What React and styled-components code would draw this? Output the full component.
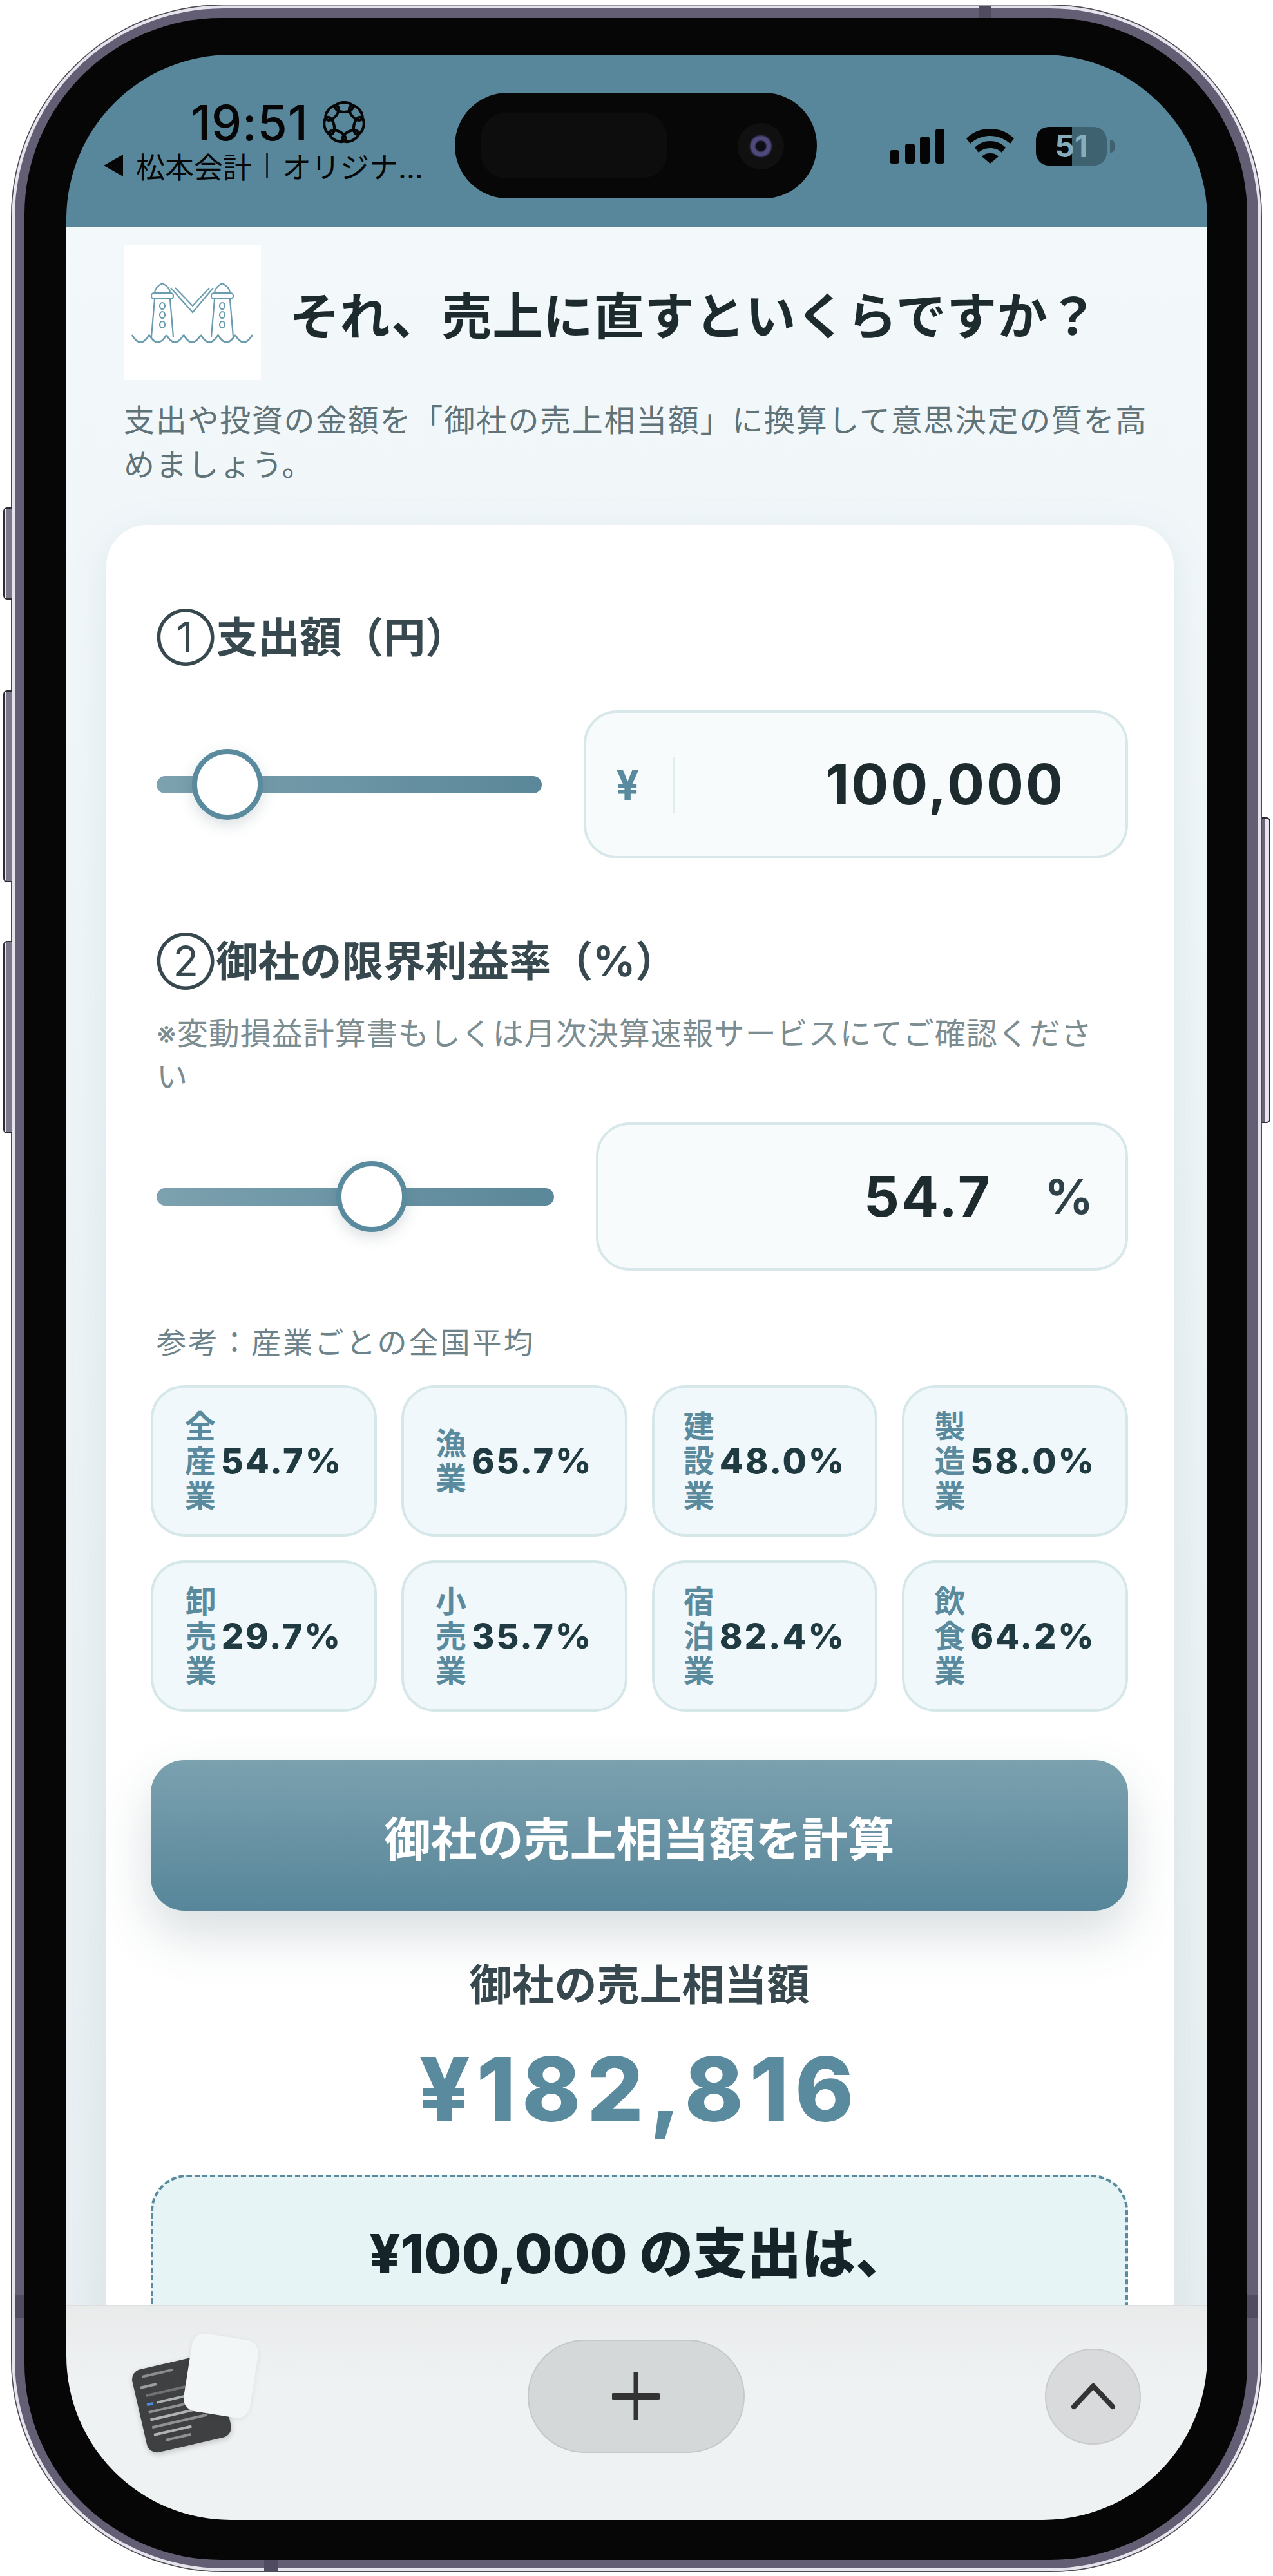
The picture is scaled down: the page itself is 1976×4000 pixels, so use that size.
import styled, { createGlobalStyle } from 'styled-components'

const GlobalStyle = createGlobalStyle`
  html, body {
    margin: 0;
    background: #fff;
    font-family: Inter, "Noto Sans CJK JP", sans-serif;
  }
`

const cjk = `Inter, "Noto Sans CJK JP", sans-serif`
const teal = '#5a8a9d'

const Page = styled.div`
  width: 1976px;
  height: 4000px;
  padding: 7px 0 0 17px;
  box-sizing: border-box;
`

const Shell = styled.div`
  position: relative;
  width: 1942px;
  height: 3987px;
  box-sizing: border-box;
  padding: 21px 23px 19px 21px;
  border-radius: 330px;
  background: #645e74;
  box-shadow: inset 0 0 0 1.5px #4a4a50, inset 0 0 0 6px #e6e3ec;
`

const Bezel = styled.div`
  width: 100%;
  height: 100%;
  box-sizing: border-box;
  padding: 57px 62px 62px 65px;
  border-radius: 305px;
  background: #060606;
`

const Screen = styled.div`
  display: flex;
  flex-direction: column;
  height: 100%;
  border-radius: 255px;
  overflow: hidden;
`

const SideButton = styled.div`
  position: absolute;
  top: ${p => p.$top}px;
  ${p => (p.$right ? 'right: -13px' : 'left: -12px')};
  width: 13px;
  height: ${p => p.$height}px;
  box-sizing: border-box;
  border: 2px solid #2b2b30;
  ${p => (p.$right ? 'border-left: none' : 'border-right: none')};
  border-radius: ${p => (p.$right ? '0 6px 6px 0' : '6px 0 0 6px')};
  background: linear-gradient(${p => (p.$right ? '90deg, #6b6579 50%, #e9e6f0 50%' : '90deg, #e9e6f0 30%, #7d778c 30%')});
`

const Band = styled.div`
  position: absolute;
  background: #514b60;
  ${p => p.$at}
`

const StatusBar = styled.div`
  position: relative;
  flex: none;
  display: flex;
  justify-content: space-between;
  height: 268px;
  box-sizing: border-box;
  padding: 72px 144px 0 57px;
  background: #58879b;
  color: #060606;
`

const StatusLeft = styled.div`
  display: flex;
  flex-direction: column;
`

const TimeRow = styled.div`
  display: flex;
  align-items: center;
  gap: 22px;
  height: 66px;
  padding-left: 136px;
  font-size: 75px;
  font-weight: 500;
  letter-spacing: 0.8px;
`

const BackLine = styled.div`
  display: flex;
  align-items: center;
  gap: 19px;
  margin-top: 10px;
  height: 48px;
  font-family: ${cjk};
  font-size: 45px;
  white-space: nowrap;
`

const BackSep = styled.span`
  display: inline-block;
  width: 3px;
  height: 40px;
  margin: 0 22px 0 22px;
  background: #1d2c33;
`

const Island = styled.div`
  position: absolute;
  left: 603px;
  top: 59px;
  width: 562px;
  height: 164px;
  border-radius: 82px;
  background: #070707;
`

const IslandPatch = styled.div`
  position: absolute;
  left: 40px;
  top: 31px;
  width: 290px;
  height: 102px;
  border-radius: 40px;
  background: #0d0d0d;
`

const Lens = styled.div`
  position: absolute;
  left: 439px;
  top: 47px;
  width: 72px;
  height: 72px;
  border-radius: 50%;
  background: radial-gradient(circle, #0e0d16 0 7px, #4e4a7c 10px 15px, #14131a 18px, #101010 20px);
`

const StatusRight = styled.div`
  display: flex;
  align-items: center;
  gap: 34px;
  height: 60px;
  margin-top: 40px;
`

const Battery = styled.div`
  position: relative;
  width: 110px;
  height: 60px;
  border-radius: 20px;
  overflow: hidden;
  background: linear-gradient(90deg, #050505 51%, #3f6270 51%);
  color: #86adba;
  font-size: 48px;
  font-weight: 700;
  line-height: 60px;
  text-align: center;
`

const BatteryNub = styled.div`
  width: 7px;
  height: 20px;
  margin-left: -29px;
  border-radius: 0 6px 6px 0;
  background: #3f6270;
`

const Content = styled.div`
  flex: 1;
  min-height: 0;
  overflow: hidden;
  padding: 28px 52px 0 62px;
  background: linear-gradient(180deg, #f3f8fb 0%, #eef4f6 40%, #e8eef1 100%);
  font-family: ${cjk};
`

const Header = styled.div`
  display: flex;
  align-items: center;
  gap: 44px;
  margin-left: 27px;
`

const LogoBox = styled.div`
  flex: none;
  width: 213px;
  height: 209px;
  background: #fff;
`

const Title = styled.h1`
  margin: 0;
  font-size: 78px;
  font-weight: 700;
  letter-spacing: 0.6px;
  color: #1d2b2f;
  white-space: nowrap;
`

const Lead = styled.p`
  margin: 28px 0 59px 27px;
  width: 1620px;
  font-size: 48px;
  line-height: 69px;
  letter-spacing: 1.7px;
  color: #5f7378;
`

const Card = styled.div`
  box-sizing: border-box;
  padding: 137px 71px 100px 69px;
  border-radius: 64px;
  background: #fff;
  box-shadow: 0 12px 60px rgba(90, 138, 157, 0.12);
`

const FieldLabel = styled.div`
  margin: ${p => p.$top || 0}px 0 0 9px;
  font-size: 65px;
  line-height: 76px;
  font-weight: 700;
  color: #37494f;
`

const CircledNum = styled.span`
  font-weight: 400;
  margin-right: 2px;
`

const Row = styled.div`
  display: flex;
  align-items: center;
  gap: 65px;
  margin-top: ${p => p.$top}px;
  padding-left: 9px;
`

const Slider = styled.div`
  position: relative;
  flex: 1;
  height: 27px;
  border-radius: 14px;
  background: linear-gradient(90deg, #7ca1af, #5a8799);
`

const Thumb = styled.div`
  position: absolute;
  top: -42px;
  left: ${p => p.$left}px;
  width: 110px;
  height: 110px;
  box-sizing: border-box;
  border: 8px solid ${teal};
  border-radius: 50%;
  background: #fff;
  box-shadow: 0 8px 22px rgba(50, 80, 90, 0.18);
`

const InputBox = styled.div`
  flex: none;
  display: flex;
  align-items: center;
  width: ${p => p.$width}px;
  height: 230px;
  box-sizing: border-box;
  padding: 0 ${p => p.$pr}px 0 46px;
  border: 4px solid #d8e8ea;
  border-radius: 52px;
  background: #f7fbfc;
`

const Yen = styled.span`
  width: 43px;
  font-family: ${cjk};
  font-size: 64px;
  font-weight: 700;
  color: ${teal};
`

const YenSep = styled.span`
  width: 3px;
  height: 87px;
  margin-left: 46px;
  background: #e0ecee;
`

const InputValue = styled.span`
  flex: 1;
  text-align: right;
  font-family: Inter, sans-serif;
  font-size: 86px;
  font-weight: 700;
  letter-spacing: 3px;
  color: #1d2b2f;
`

const Unit = styled.span`
  margin-left: 82px;
  font-family: Inter, sans-serif;
  font-size: 74px;
  font-weight: 700;
  color: #2f4248;
`

const Note = styled.p`
  margin: 40px 0 0 9px;
  width: 1490px;
  font-size: 48px;
  line-height: 67px;
  letter-spacing: 1px;
  color: #7c8d92;
`

const RefLabel = styled.div`
  margin: 81px 0 37px 9px;
  font-size: 46px;
  line-height: 60px;
  letter-spacing: 3px;
  color: #6d8389;
`

const ChipGrid = styled.div`
  display: grid;
  grid-template-columns: repeat(4, 1fr);
  gap: 37px 38px;
`

const Chip = styled.div`
  display: flex;
  align-items: center;
  justify-content: center;
  gap: 8px;
  height: 235px;
  box-sizing: border-box;
  border: 4px solid #d6e7ea;
  border-radius: 52px;
  background: #f1f8fb;
`

const ChipName = styled.span`
  flex: none;
  width: 48px;
  font-size: 48px;
  line-height: 54px;
  font-weight: 700;
  color: ${teal};
`

const ChipRate = styled.span`
  flex: none;
  font-family: Inter, sans-serif;
  font-size: 54px;
  font-weight: 800;
  letter-spacing: 2.8px;
  color: #1f3a40;
`

const CalcButton = styled.button`
  display: block;
  width: 100%;
  height: 234px;
  margin-top: 75px;
  border: none;
  border-radius: 52px;
  background: linear-gradient(180deg, #7ba1af, #57869a);
  box-shadow: 0 36px 80px rgba(60, 90, 100, 0.2);
  color: #fff;
  font-family: ${cjk};
  font-size: 72px;
  font-weight: 700;
`

const ResultLabel = styled.div`
  margin-top: 77px;
  font-size: 66px;
  line-height: 76px;
  font-weight: 700;
  text-align: center;
  color: #37494f;
`

const ResultValue = styled.div`
  margin-top: 44px;
  font-family: Inter, "Noto Sans CJK JP", sans-serif;
  font-size: 138px;
  line-height: 160px;
  font-weight: 800;
  letter-spacing: 9.5px;
  text-align: center;
  color: ${teal};
`

const ResultBox = styled.div`
  box-sizing: border-box;
  min-height: 500px;
  margin-top: 53px;
  padding-top: 69px;
  border: 4px dashed ${teal};
  border-radius: 56px;
  background: #e6f4f6;
  font-size: 84px;
  line-height: 100px;
  font-weight: 800;
  text-align: center;
  color: #142428;
`

const BottomBar = styled.div`
  flex: none;
  display: grid;
  grid-template-columns: 1fr auto 1fr;
  align-items: center;
  height: 334px;
  box-sizing: border-box;
  padding: 0 103px 52px 100px;
  border-top: 2px solid #dcdfe0;
  background: linear-gradient(180deg, #e9ebeb, #eff2f3 35%);
`

const TabStack = styled.div`
  position: relative;
  width: 220px;
  height: 190px;
`

const TabDark = styled.div`
  position: absolute;
  left: 12px;
  top: 40px;
  width: 134px;
  height: 132px;
  border-radius: 16px;
  overflow: hidden;
  background: #3f4042;
  transform: rotate(-13deg);
  box-shadow: 0 3px 8px rgba(0, 0, 0, 0.2);
`

const TabLight = styled.div`
  position: absolute;
  left: 88px;
  top: 2px;
  width: 104px;
  height: 122px;
  border-radius: 20px;
  background: #f3f6f7;
  transform: rotate(9deg);
  box-shadow: 0 2px 8px rgba(0, 0, 0, 0.08);
`

const PlusButton = styled.button`
  display: flex;
  align-items: center;
  justify-content: center;
  width: 337px;
  height: 176px;
  padding: 0;
  border: 2px solid #c5c8c9;
  border-radius: 88px;
  background: #d5d8d9;
`

const UpButton = styled.button`
  justify-self: end;
  display: flex;
  align-items: center;
  justify-content: center;
  width: 149px;
  height: 149px;
  padding: 0;
  border: 2px solid #c9cbcc;
  border-radius: 50%;
  background: #d8dadb;
`

// seven overlapping lobes in a ring, next to the clock
function FocusIcon() {
  const lobes = [0, 1, 2, 3, 4, 5, 6].map(i => (i * 360) / 7)
  return (
    <svg width="66" height="66" viewBox="0 0 66 66" fill="none" stroke="#060606" strokeWidth="4.2">
      {lobes.map(a => (
        <ellipse key={a} cx="33" cy="9.5" rx="13.5" ry="7.5" transform={`rotate(${a} 33 33)`} />
      ))}
    </svg>
  )
}

function BackArrow() {
  return (
    <svg width="32" height="36" viewBox="0 0 32 36">
      <path d="M31 1 L1 18 L31 35 Z" fill="#060606" />
    </svg>
  )
}

function SignalIcon() {
  return (
    <svg width="85" height="54" viewBox="0 0 85 54" fill="#050505">
      <rect x="0" y="33" width="15" height="21" rx="4" />
      <rect x="24" y="23" width="15" height="31" rx="4" />
      <rect x="47" y="12" width="15" height="42" rx="4" />
      <rect x="71" y="0" width="14" height="54" rx="4" />
    </svg>
  )
}

function WifiIcon() {
  return (
    <svg width="74" height="54" viewBox="0 0 74 54" fill="#050505">
      <path d="M37 0 C51 0 64 5 74 15 L68 23 C59 15 48 11 37 11 C26 11 15 15 6 23 L0 15 C10 5 23 0 37 0 Z" />
      <path d="M37 19 C46 19 54 22 61 29 L55 37 C50 32 44 30 37 30 C30 30 24 32 19 37 L13 29 C20 22 28 19 37 19 Z" />
      <path d="M37 38 C42 38 46 39 50 43 L37 54 L24 43 C28 39 32 38 37 38 Z" />
    </svg>
  )
}

function LighthouseLogo() {
  const waves = [0, 1, 2, 3, 4, 5, 6].map(i => `M${13 + i * 26.7} 139 Q${26 + i * 26.7} 162 ${39.7 + i * 26.7} 139`)
  const tower = x => (
    <g key={x}>
      <path d={`M${x - 12} 74 C${x - 12} 66 ${x - 6} 62 ${x} 59 C${x + 6} 62 ${x + 12} 66 ${x + 12} 74`} />
      <rect x={x - 17} y="74" width="34" height="9" rx="4" />
      <path d={`M${x - 12} 84 L${x - 17} 142 M${x + 12} 84 L${x + 17} 142`} />
      <ellipse cx={x} cy="94" rx="4" ry="5" />
      <ellipse cx={x} cy="108" rx="4" ry="5" />
      <ellipse cx={x} cy="123" rx="4" ry="5" />
    </g>
  )
  return (
    <svg width="213" height="209" viewBox="0 0 213 209" fill="none" stroke="#6a9cb0" strokeWidth="2.2">
      {tower(60)}
      {tower(153)}
      <path d="M73 66 L107 104 L139 66 M80 66 L107 94 L133 66" />
      {waves.map(d => (
        <path key={d} d={d} strokeWidth="2.6" />
      ))}
    </svg>
  )
}

function CodeThumb() {
  const rows = [
    ['#8b8d90', 10, 16, 50], ['#9a9c9f', 26, 10, 26], ['#6f7174', 40, 16, 70], ['#4a8be0', 54, 14, 10],
    ['#b0b2b5', 54, 30, 60], ['#8f9194', 66, 14, 90], ['#b0b2b5', 78, 14, 72], ['#8f9194', 90, 14, 88],
    ['#b0b2b5', 102, 14, 60], ['#8f9194', 114, 30, 40],
  ]
  return (
    <svg width="134" height="132" viewBox="0 0 134 132">
      {rows.map(([c, y, x, w]) => (
        <rect key={`${y}-${x}`} x={x} y={y} width={w} height="4" fill={c} />
      ))}
    </svg>
  )
}

const rates = [
  ['全産業', '54.7%'], ['漁業', '65.7%'], ['建設業', '48.0%'], ['製造業', '58.0%'],
  ['卸売業', '29.7%'], ['小売業', '35.7%'], ['宿泊業', '82.4%'], ['飲食業', '64.2%'],
]

const App = () => {
  return (
    <>
      <GlobalStyle />
      <Page>
        <Shell>
          <SideButton $top={781} $height={143} />
          <SideButton $top={1065} $height={298} />
          <SideButton $top={1454} $height={299} />
          <SideButton $right $top={1262} $height={475} />
          <Band $at="left: 1502px; top: 3px; width: 19px; height: 18px;" />
          <Band $at="left: 393px; bottom: 0; width: 22px; height: 19px;" />
          <Band $at="left: 6px; top: 3556px; width: 15px; height: 37px;" />
          <Band $at="right: 6px; top: 3556px; width: 17px; height: 37px;" />
          <Bezel>
            <Screen>
              <StatusBar>
                <StatusLeft>
                  <TimeRow>
                    <span>19:51</span>
                    <FocusIcon />
                  </TimeRow>
                  <BackLine>
                    <BackArrow />
                    <span>松本会計<BackSep />オリジナ…</span>
                  </BackLine>
                </StatusLeft>
                <Island>
                  <IslandPatch />
                  <Lens />
                </Island>
                <StatusRight>
                  <SignalIcon />
                  <WifiIcon />
                  <Battery>51</Battery>
                  <BatteryNub />
                </StatusRight>
              </StatusBar>

              <Content>
                <Header>
                  <LogoBox>
                    <LighthouseLogo />
                  </LogoBox>
                  <Title>それ、売上に直すといくらですか？</Title>
                </Header>
                <Lead>支出や投資の金額を「御社の売上相当額」に換算して意思決定の質を高めましょう。</Lead>

                <Card>
                  <FieldLabel><CircledNum>①</CircledNum>支出額（円）</FieldLabel>
                  <Row $top={75}>
                    <Slider>
                      <Thumb $left={55} />
                    </Slider>
                    <InputBox $width={845} $pr={94}>
                      <Yen>¥</Yen>
                      <YenSep />
                      <InputValue>100,000</InputValue>
                    </InputBox>
                  </Row>

                  <FieldLabel $top={122}><CircledNum>②</CircledNum>御社の限界利益率（%）</FieldLabel>
                  <Note>※変動損益計算書もしくは月次決算速報サービスにてご確認ください</Note>
                  <Row $top={38}>
                    <Slider>
                      <Thumb $left={279} />
                    </Slider>
                    <InputBox $width={826} $pr={50}>
                      <InputValue>54.7</InputValue>
                      <Unit>%</Unit>
                    </InputBox>
                  </Row>

                  <RefLabel>参考：産業ごとの全国平均</RefLabel>
                  <ChipGrid>
                    {rates.map(([name, rate]) => (
                      <Chip key={name}>
                        <ChipName>{name}</ChipName>
                        <ChipRate>{rate}</ChipRate>
                      </Chip>
                    ))}
                  </ChipGrid>

                  <CalcButton>御社の売上相当額を計算</CalcButton>

                  <ResultLabel>御社の売上相当額</ResultLabel>
                  <ResultValue>¥182,816</ResultValue>
                  <ResultBox>¥100,000 の支出は、</ResultBox>
                </Card>
              </Content>

              <BottomBar>
                <TabStack>
                  <TabDark>
                    <CodeThumb />
                  </TabDark>
                  <TabLight />
                </TabStack>
                <PlusButton>
                  <svg width="74" height="74" viewBox="0 0 74 74">
                    <path d="M37 0 V74" stroke="#333" strokeWidth="7" strokeLinecap="round" />
                    <path d="M2 37 H72" stroke="#333" strokeWidth="10" strokeLinecap="round" />
                  </svg>
                </PlusButton>
                <UpButton>
                  <svg width="70" height="42" viewBox="0 0 70 42" fill="none" stroke="#333" strokeWidth="8" strokeLinecap="round" strokeLinejoin="round">
                    <path d="M5 37 L35 5 L65 37" />
                  </svg>
                </UpButton>
              </BottomBar>
            </Screen>
          </Bezel>
        </Shell>
      </Page>
    </>
  )
}

export default App
